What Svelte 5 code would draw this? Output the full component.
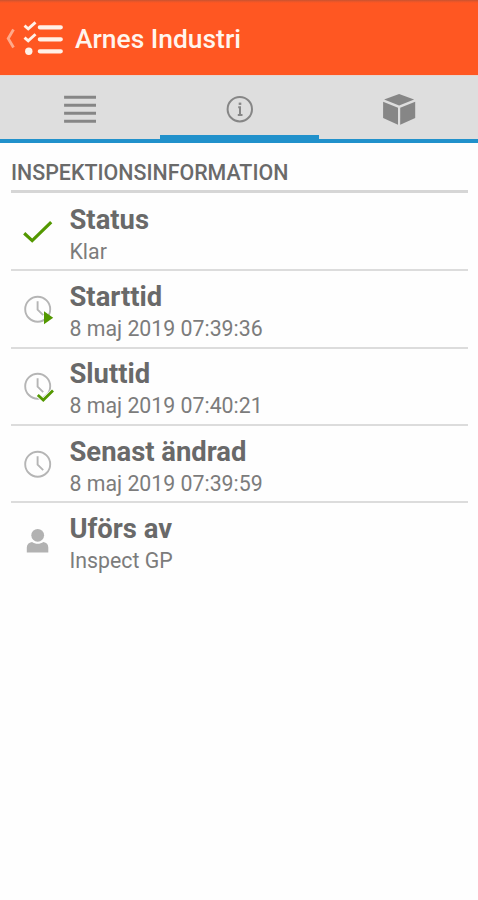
<script>
  const rows = [
    { icon: 'check', title: 'Status', value: 'Klar' },
    { icon: 'start', title: 'Starttid', value: '8 maj 2019 07:39:36' },
    { icon: 'end', title: 'Sluttid', value: '8 maj 2019 07:40:21' },
    { icon: 'clock', title: 'Senast ändrad', value: '8 maj 2019 07:39:59' },
    { icon: 'person', title: 'Uförs av', value: 'Inspect GP' }
  ];
</script>

<div class="screen">
  <header>
    <svg class="brand" width="75" height="75" viewBox="0 0 75 75" fill="none">
      <path d="M13.5 29.5L8.2 38.5L13.5 47.5" stroke="#ffa98a" stroke-width="2.8" />
      <path d="M24.5 25.7L28.2 28.8L35.5 22.3M24.5 37.7L28.2 40.9L35.5 34.2" stroke="#fff1e8" stroke-width="2.9" />
      <path d="M39.8 27.3H60.8M39.8 39.3H60.8M39.8 51.3H60.8" stroke="#fff1e8" stroke-width="4.2" stroke-linecap="round" />
      <circle cx="28.8" cy="51.3" r="3.7" fill="#fff1e8" />
    </svg>
    <h1>Arnes Industri</h1>
  </header>

  <nav>
    <div class="tab">
      <svg width="36" height="36" viewBox="0 0 36 36" fill="none">
        <path d="M2.1 5.2H34M2.1 13.2H34M2.1 21.2H34M2.1 29.2H34" stroke="#868686" stroke-width="3" />
      </svg>
    </div>
    <div class="tab active">
      <svg width="36" height="36" viewBox="0 0 36 36" fill="none">
        <circle cx="17.8" cy="17.2" r="12.2" stroke="#868686" stroke-width="2" />
        <path d="M16.2 15.3H18V22.7M15.8 23H20.5" stroke="#868686" stroke-width="2" />
        <rect x="16.7" y="10.6" width="2.6" height="2.3" fill="#868686" />
      </svg>
    </div>
    <div class="tab">
      <svg width="36" height="36" viewBox="0 0 36 36" fill="#868686">
        <path d="M18.1 2L33.1 7.6L18.1 13.5L3.1 7.6Z" />
        <path d="M2.1 9.7L17 15.8V32.7L2.1 26Z" />
        <path d="M34.2 9.7L19.2 15.8V32.7L34.2 26Z" />
      </svg>
    </div>
  </nav>

  <main>
    <h2>INSPEKTIONSINFORMATION</h2>
    <ul>
      {#each rows as row}
        <li>
          <svg class="mark" width="36" height="36" viewBox="0 0 36 36" fill="none">
            {#if row.icon === 'check'}
              <path d="M5.2 18.3L13.2 25.6L32.2 7.2" stroke="#539800" stroke-width="3.2" />
            {:else if row.icon === 'person'}
              <circle cx="18.7" cy="11.3" r="6.4" fill="#b2b2b2" />
              <path d="M7.8 28.6V23.6C7.8 20.4 9.8 18.4 13 17.9C16.2 20.3 21.2 20.3 24.4 17.9C27.6 18.4 29.3 20.4 29.3 23.6V28.6Z" fill="#b2b2b2" />
            {:else}
              <circle cx="18.7" cy="17.2" r="12.5" stroke="#b5b5b5" stroke-width="1.9" />
              <path d="M18.6 9.3V17.6L24.2 23.2" stroke="#b5b5b5" stroke-width="1.9" />
              {#if row.icon === 'start'}
                <path d="M25 19.3L34.2 25.8L25 32.3Z" fill="#539800" />
              {:else if row.icon === 'end'}
                <path d="M18.8 26L24.3 31L34 21.6" stroke="#fefefe" stroke-width="4.4" />
                <path d="M18.8 26L24.3 31L34 21.6" stroke="#539800" stroke-width="2.8" />
              {/if}
            {/if}
          </svg>
          <div class="text">
            <strong>{row.title}</strong>
            <span>{row.value}</span>
          </div>
        </li>
      {/each}
    </ul>
  </main>
</div>

<style>
  :global(body) {
    background: #fefefe;
  }
  .screen {
    width: 478px;
    height: 900px;
    overflow: hidden;
    background: #fefefe;
    font-family: Roboto, 'Liberation Sans', sans-serif;
    color: #666;
  }
  header {
    box-sizing: border-box;
    height: 75px;
    display: flex;
    background: linear-gradient(#c9532f 0, #e8562a 1.5px, #ff5722 3px);
  }
  .brand {
    flex: none;
  }
  h1 {
    margin: 0;
    padding-top: 3px;
    font-size: 26.4px;
    line-height: 72px;
    font-weight: 500;
    color: #fff5ee;
    white-space: nowrap;
  }
  nav {
    box-sizing: border-box;
    height: 68px;
    display: flex;
    background: #dedede;
    border-top: 1px solid #e6d5cf;
    border-bottom: 4px solid #2191cb;
  }
  .tab {
    box-sizing: border-box;
    flex: none;
    width: 159.5px;
    display: flex;
    justify-content: center;
    padding-top: 16px;
  }
  .tab:first-child {
    width: 160px;
  }
  .tab.active {
    width: 159px;
    border-bottom: 4px solid #2191cb;
  }
  main {
    padding: 0 10px 0 11px;
  }
  h2 {
    margin: 0;
    height: 47px;
    border-bottom: 3px solid #d6d6d6;
    font-size: 21.4px;
    line-height: 59px;
    font-weight: 500;
    white-space: nowrap;
    color: #6a6a6a;
  }
  ul {
    margin: 0;
    padding: 1px 0 0;
    list-style: none;
  }
  li {
    box-sizing: border-box;
    height: 77.35px;
    display: flex;
    border-bottom: 2px solid #dcdcdc;
  }
  li:last-child {
    border-bottom: 0;
  }
  .mark {
    flex: none;
    margin: 20.5px 14.5px 0 8px;
  }
  .text {
    display: flex;
    flex-direction: column;
    padding-top: 8.6px;
    white-space: nowrap;
  }
  strong {
    font-size: 27.4px;
    line-height: 34px;
    font-weight: 700;
    color: #696969;
  }
  span {
    font-size: 21.3px;
    line-height: 30px;
    color: #7c7c7c;
  }
</style>
